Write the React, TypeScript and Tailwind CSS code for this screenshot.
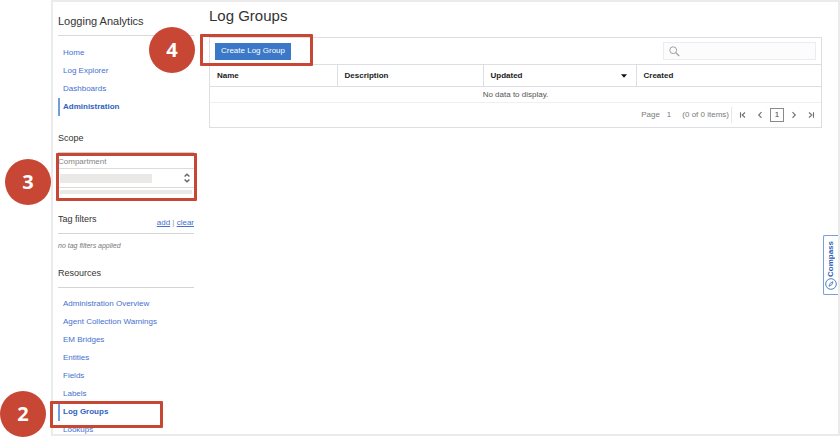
import React from "react";

const mainLinks = ["Home", "Log Explorer", "Dashboards", "Administration"];
const resourceLinks = [
  "Administration Overview",
  "Agent Collection Warnings",
  "EM Bridges",
  "Entities",
  "Fields",
  "Labels",
  "Log Groups",
  "Lookups",
];

function NavList({ items, active, label }: { items: string[]; active: string; label: string }) {
  return (
    <nav aria-label={label}>
      <ul>
        {items.map((item) => (
          <li
            key={item}
            className={
              item === active
                ? "flex h-[18px] items-center border-l-2 border-[#6f9fdc] pl-[3px]"
                : "flex h-[18px] items-center pl-[5px]"
            }
          >
            <a
              href="#"
              className={
                item === active
                  ? "whitespace-nowrap text-[8px] leading-3 font-bold text-[#2f62bd]"
                  : "whitespace-nowrap text-[8px] leading-3 text-[#4670cf]"
              }
            >
              {item}
            </a>
          </li>
        ))}
      </ul>
    </nav>
  );
}

function Step({ n, className }: { n: number; className: string }) {
  return (
    <div
      className={`absolute flex size-[46px] items-center justify-center rounded-full bg-[#c74634] font-['Open_Sans',sans-serif] text-[20px] leading-6 font-bold text-white ${className}`}
    >
      {n}
    </div>
  );
}

function Outline({ className }: { className: string }) {
  return (
    <div
      className={`pointer-events-none absolute rounded-[1px] border-3 border-[#c74634] ${className}`}
    />
  );
}

function PageButton({ label, d }: { label: string; d: string }) {
  return (
    <button type="button" aria-label={label} className="flex size-[14px] items-center justify-center">
      <svg viewBox="0 0 8 8" className="size-2" fill="none" stroke="#6f6f6f" strokeWidth="1.1">
        <path d={d} />
      </svg>
    </button>
  );
}

function Sidebar() {
  return (
    <aside className="w-[136px] shrink-0 text-[#333]">
      <h2 className="border-b border-[#d9d9d9] pt-[11px] pb-[6px] text-[11px] leading-4">
        Logging Analytics
      </h2>
      <div className="pt-2">
        <NavList items={mainLinks} active="Administration" label="Logging Analytics" />
      </div>

      <h3 className="border-b border-[#cfcfcf] pt-[14px] pb-[6px] text-[9px] leading-4">Scope</h3>
      <label htmlFor="compartment" className="block pt-[3px] text-[8px] leading-3 text-[#858585]">
        Compartment
      </label>
      <div className="relative flex h-5 items-center justify-between border-y border-[#dcdcdc] pr-1 pl-[2px]">
        <span className="h-[9px] w-[92px] bg-[#eae9e8]" />
        <svg viewBox="0 0 6 10" className="h-[10px] w-[6px]" fill="none" stroke="#666" strokeWidth="1.4">
          <path d="M0.6 3.6 3 1.2 5.4 3.6M0.6 6.4 3 8.8 5.4 6.4" />
        </svg>
        <select
          id="compartment"
          className="absolute inset-0 w-full cursor-pointer appearance-none bg-transparent"
        >
          <option value="" />
        </select>
      </div>
      <div className="mx-[2px] mt-[2px] h-1 bg-[#eae9e8]" />

      <div className="flex items-end justify-between border-b border-[#d4d4d4] pt-[17px] pb-[4px]">
        <h3 className="pb-[2px] text-[9px] leading-4">Tag filters</h3>
        <p className="text-[8px] leading-3 text-[#999]">
          <a href="#" className="text-[#4670cf] underline">add</a>
          {" | "}
          <a href="#" className="text-[#4670cf] underline">clear</a>
        </p>
      </div>
      <p className="pt-[6px] text-[7px] leading-3 text-[#777] italic">no tag filters applied</p>

      <h3 className="border-b border-[#d4d4d4] pt-[13px] pb-[6px] text-[9px] leading-4">Resources</h3>
      <div className="pt-[7px]">
        <NavList items={resourceLinks} active="Log Groups" label="Resources" />
      </div>
    </aside>
  );
}

function LogGroups() {
  return (
    <main className="min-w-0 flex-1 pt-1">
      <h1 className="text-[15px] leading-5 text-[#333]">Log Groups</h1>
      <section className="mt-[11px] border border-[#dcdee3] text-[8px] leading-3">
        <div className="flex h-[26px] items-center justify-between pr-[5px] pl-[5px]">
          <button
            type="button"
            className="h-[17px] w-[76px] whitespace-nowrap bg-[#3b78c8] text-[8px] leading-3 text-white"
          >
            Create Log Group
          </button>
          <label className="flex h-[18px] w-[153px] items-center border border-[#e9ecf1] bg-[#fcfcfc] pl-[5px]">
            <svg viewBox="0 0 11 11" className="size-[11px] shrink-0" fill="none" stroke="#a2a2a2">
              <circle cx="4.2" cy="4.2" r="3.4" strokeWidth="1" />
              <path d="M6.8 6.8 10.2 10" strokeWidth="1.2" />
            </svg>
            <input type="search" aria-label="Search" className="ml-1 min-w-0 flex-1 bg-transparent outline-none" />
          </label>
        </div>

        <table className="w-full table-fixed border-collapse">
          <thead>
            <tr className="h-[22px] border-y border-[#dcdee3] text-left text-[#222]">
              <th className="w-[127px] border-r border-[#dcdee3] pl-[7px] font-bold">Name</th>
              <th className="w-[146px] border-r border-[#dcdee3] pl-[7px] font-bold">Description</th>
              <th className="w-[153px] border-r border-[#dcdee3] pr-[9px] pl-[7px] font-bold">
                <div className="flex items-center justify-between">
                  Updated
                  <svg viewBox="0 0 6 4" className="h-1 w-[6px]" fill="#111">
                    <path d="M0 0.3h6L3 3.8z" />
                  </svg>
                </div>
              </th>
              <th className="pl-[7px] font-bold">Created</th>
            </tr>
          </thead>
          <tbody>
            <tr className="h-4 border-b border-[#f0f0f1]">
              <td colSpan={4} className="text-center text-[#555]">No data to display.</td>
            </tr>
          </tbody>
        </table>

        <div className="flex h-6 items-center justify-end pr-[3px] text-[#7b7b7b]">
          <span>Page</span>
          <span className="ml-[7px]">1</span>
          <span className="ml-[11px]">(0 of 0 items)</span>
          <span className="ml-[2px] h-4 border-l border-[#e6e6e6]" />
          <div className="ml-1 flex items-center gap-[3px]">
            <PageButton label="First page" d="M1.5 1.2v5.6M6 1.5 3.2 4 6 6.5" />
            <PageButton label="Previous page" d="M5.5 1.2 2.7 4 5.5 6.8" />
            <button
              type="button"
              aria-current="page"
              className="size-[14px] border border-[#8a8a8a] text-center leading-3 text-[#444]"
            >
              1
            </button>
            <PageButton label="Next page" d="M2.5 1.2 5.3 4 2.5 6.8" />
            <PageButton label="Last page" d="M6.5 1.2v5.6M2 1.5 4.8 4 2 6.5" />
          </div>
        </div>
      </section>
    </main>
  );
}

export default function App() {
  return (
    <div className="relative h-screen overflow-hidden bg-white pb-[2px] pl-[51px] font-['Liberation_Sans',Arial,sans-serif]">
      <div className="flex h-full gap-[15px] overflow-hidden border-2 border-[#ebebeb] pr-4 pl-[5px]">
        <Sidebar />
        <LogGroups />
      </div>

      <button
        type="button"
        className="absolute top-[235px] right-[2px] flex h-[60px] w-[15px] flex-col items-center justify-between rounded-l-[2px] border border-r-0 border-[#7ba0d8] bg-white pt-[5px] pb-1"
      >
        <span className="rotate-180 text-[8px] leading-3 font-bold text-[#2f62b5] [writing-mode:vertical-rl]">
          Compass
        </span>
        <svg viewBox="0 0 12 12" className="size-3 shrink-0" fill="none" stroke="#3f70c0">
          <circle cx="6" cy="6" r="5.3" strokeWidth="0.9" />
          <path d="M8 3.7 6.9 6.7 4 8.3 5.1 5.3z" strokeWidth="0.8" />
        </svg>
      </button>

      <Outline className="top-[34px] left-[200px] h-[32px] w-[113px]" />
      <Outline className="top-[153px] left-[56px] h-[48px] w-[141px]" />
      <Outline className="top-[401px] left-[50px] h-[27px] w-[113px]" />
      <Step n={4} className="top-[27px] left-[149px]" />
      <Step n={3} className="top-[159px] left-[5px]" />
      <Step n={2} className="top-[391px] left-[0px]" />
    </div>
  );
}
